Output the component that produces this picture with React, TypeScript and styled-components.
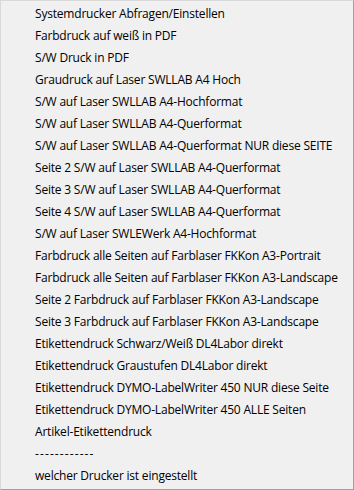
import React from "react";
import styled, { createGlobalStyle } from "styled-components";

const Global = createGlobalStyle`
  html, body { margin: 0; padding: 0; background: #f0f0f0; }
  #root { width: 354px; height: 490px; }
`;

const Menu = styled.ul`
  box-sizing: border-box;
  width: 354px;
  height: 490px;
  margin: 0;
  padding: 2px 0 2px 0;
  list-style: none;
  background: #f0f0f0;
  border-top: 1px solid #d9d9d9;
  border-left: 1px solid #d9d9d9;
  border-right: 1px solid #a0a0a0;
  border-bottom: 1px solid #a0a0a0;
  font-family: "Segoe UI", "Open Sans", "Noto Sans", sans-serif;
  font-size: 12px;
  color: #000;
`;

const Item = styled.li<{ $dashes?: boolean }>`
  height: 22px;
  line-height: 22px;
  padding-left: 34px;
  white-space: nowrap;
  letter-spacing: ${(p) => (p.$dashes ? "1.1px" : "-0.2px")};
`;

const items = [
  "Systemdrucker Abfragen/Einstellen",
  "Farbdruck auf weiß in PDF",
  "S/W Druck in PDF",
  "Graudruck auf Laser SWLLAB A4 Hoch",
  "S/W auf Laser SWLLAB A4-Hochformat",
  "S/W auf Laser SWLLAB A4-Querformat",
  "S/W auf Laser SWLLAB A4-Querformat NUR diese SEITE",
  "Seite 2 S/W auf Laser SWLLAB A4-Querformat",
  "Seite 3 S/W auf Laser SWLLAB A4-Querformat",
  "Seite 4 S/W auf Laser SWLLAB A4-Querformat",
  "S/W auf Laser SWLEWerk A4-Hochformat",
  "Farbdruck alle Seiten auf Farblaser FKKon A3-Portrait",
  "Farbdruck alle Seiten auf Farblaser FKKon A3-Landscape",
  "Seite 2 Farbdruck auf Farblaser FKKon A3-Landscape",
  "Seite 3 Farbdruck auf Farblaser FKKon A3-Landscape",
  "Etikettendruck Schwarz/Weiß DL4Labor direkt",
  "Etikettendruck Graustufen DL4Labor direkt",
  "Etikettendruck DYMO-LabelWriter 450 NUR diese Seite",
  "Etikettendruck DYMO-LabelWriter 450 ALLE Seiten",
  "Artikel-Etikettendruck",
  "------------",
  "welcher Drucker ist eingestellt",
];

export default function App() {
  return (
    <>
      <Global />
      <Menu>
        {items.map((t, i) => (
          <Item key={i} $dashes={t.startsWith("---")}>
            {t}
          </Item>
        ))}
      </Menu>
    </>
  );
}
